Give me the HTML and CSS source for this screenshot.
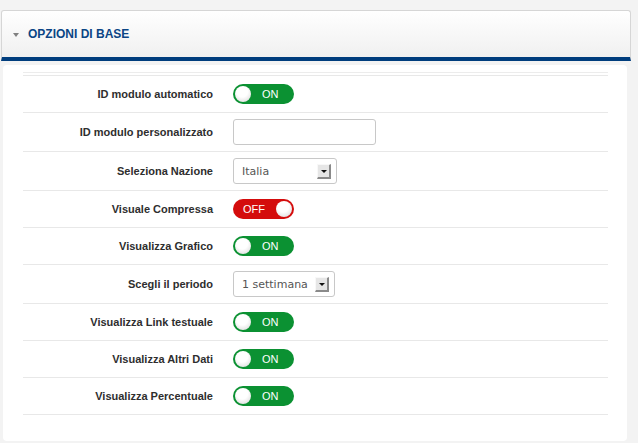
FILE: index.html
```html
<!DOCTYPE html>
<html>
<head>
  <title>Opzioni di base</title>
  <link rel="stylesheet" href="styles.css">
</head>

<body>
  <div class="panel-head">
    <span class="caret"></span>
    <span class="panel-title">OPZIONI DI BASE</span>
  </div>

  <div class="panel-body">
    <div class="fields">
      <div class="row">
        <label class="row-label">ID modulo automatico</label>
        <div class="row-control"><span class="toggle on"><span class="knob"></span><span class="toggle-text">ON</span></span></div>
      </div>
      <div class="row">
        <label class="row-label">ID modulo personalizzato</label>
        <div class="row-control"><input type="text" class="text-input"></div>
      </div>
      <div class="row">
        <label class="row-label">Seleziona Nazione</label>
        <div class="row-control"><div class="select sel-nation"><span>Italia</span><span class="arrow"></span></div></div>
      </div>
      <div class="row">
        <label class="row-label">Visuale Compressa</label>
        <div class="row-control"><span class="toggle off"><span class="toggle-text">OFF</span><span class="knob"></span></span></div>
      </div>
      <div class="row">
        <label class="row-label">Visualizza Grafico</label>
        <div class="row-control"><span class="toggle on"><span class="knob"></span><span class="toggle-text">ON</span></span></div>
      </div>
      <div class="row">
        <label class="row-label">Scegli il periodo</label>
        <div class="row-control"><div class="select sel-period"><span>1 settimana</span><span class="arrow"></span></div></div>
      </div>
      <div class="row">
        <label class="row-label">Visualizza Link testuale</label>
        <div class="row-control"><span class="toggle on"><span class="knob"></span><span class="toggle-text">ON</span></span></div>
      </div>
      <div class="row">
        <label class="row-label">Visualizza Altri Dati</label>
        <div class="row-control"><span class="toggle on"><span class="knob"></span><span class="toggle-text">ON</span></span></div>
      </div>
      <div class="row">
        <label class="row-label">Visualizza Percentuale</label>
        <div class="row-control"><span class="toggle on"><span class="knob"></span><span class="toggle-text">ON</span></span></div>
      </div>
    </div>
  </div>
</body>

</html>
```

FILE: styles.css
```css
body {
  margin: 0;
  background-color: #f3f3f3;
  font-family: "Liberation Sans", Arial, sans-serif;
  color: #333;
}

.panel-head {
  display: flex;
  align-items: center;
  height: 46px;
  margin: 10px 7px 0 1px;
  padding-left: 11px;
  background: linear-gradient(#ffffff, #f0f0f0);
  border: 1px solid #d6d6d6;
  border-bottom: 4px solid #003d7d;
  border-radius: 3px 3px 0 0;
}

.caret {
  width: 0;
  height: 0;
  margin: 1px 9px 0 0;
  border-left: 3.5px solid transparent;
  border-right: 3.5px solid transparent;
  border-top: 4px solid #808080;
}

.panel-title {
  font-size: 12px;
  font-weight: bold;
  color: #0b4585;
}

.panel-body {
  margin: 4px 11px 2px 3px;
  padding: 7px 19px 26px 20px;
  background-color: #fff;
  border-radius: 4px;
}

.fields {
  border-top: 1px solid #ececec;
  padding-top: 2px;
}

.row {
  display: flex;
  align-items: center;
  padding: 6px 0;
  border-top: 1px solid #e8e8e8;
}

.row:last-child {
  border-bottom: 1px solid #e8e8e8;
}

.row-label {
  width: 190px;
  margin-right: 20px;
  text-align: right;
  font-size: 11px;
  font-weight: bold;
  color: #2e2e2e;
}

.row-control {
  display: flex;
  align-items: center;
}

/* interruttori ON / OFF */
.toggle {
  display: flex;
  align-items: center;
  box-sizing: border-box;
  width: 61px;
  height: 20px;
  margin: 2px 0;
  padding: 0 2px;
  border-radius: 10px;
  color: #fff;
  font-size: 11px;
}

.toggle.on {
  background-color: #0b9132;
}

.toggle.off {
  background-color: #d40c0c;
  justify-content: space-between;
  padding-left: 10px;
}

.knob {
  width: 16px;
  height: 16px;
  border-radius: 50%;
  background: radial-gradient(circle at 45% 35%, #ffffff 40%, #d4d4d4 100%);
}

.toggle.on .toggle-text {
  margin-left: 11px;
}

.text-input {
  box-sizing: border-box;
  width: 143px;
  height: 26px;
  margin: 0;
  border: 1px solid #c8c8c8;
  border-radius: 3px;
}

/* select finte */
.select {
  display: flex;
  align-items: center;
  justify-content: space-between;
  box-sizing: border-box;
  height: 26px;
  padding: 0 5px 0 8px;
  border: 1px solid #c8c8c8;
  border-radius: 3px;
  font-family: "DejaVu Sans", Verdana, sans-serif;
  font-size: 11px;
  color: #555;
}

.sel-nation {
  width: 104px;
}

.sel-period {
  width: 102px;
}

.arrow {
  position: relative;
  box-sizing: border-box;
  width: 14px;
  height: 15px;
  background-color: #e6e6e6;
  border-right: 2px solid #8a8a8a;
  border-bottom: 2px solid #8a8a8a;
  border-top: 1px solid #f8f8f8;
  border-left: 1px solid #f8f8f8;
}

.arrow::after {
  content: "";
  position: absolute;
  left: 3px;
  top: 5px;
  border-left: 3px solid transparent;
  border-right: 3px solid transparent;
  border-top: 3px solid #111;
}
```
